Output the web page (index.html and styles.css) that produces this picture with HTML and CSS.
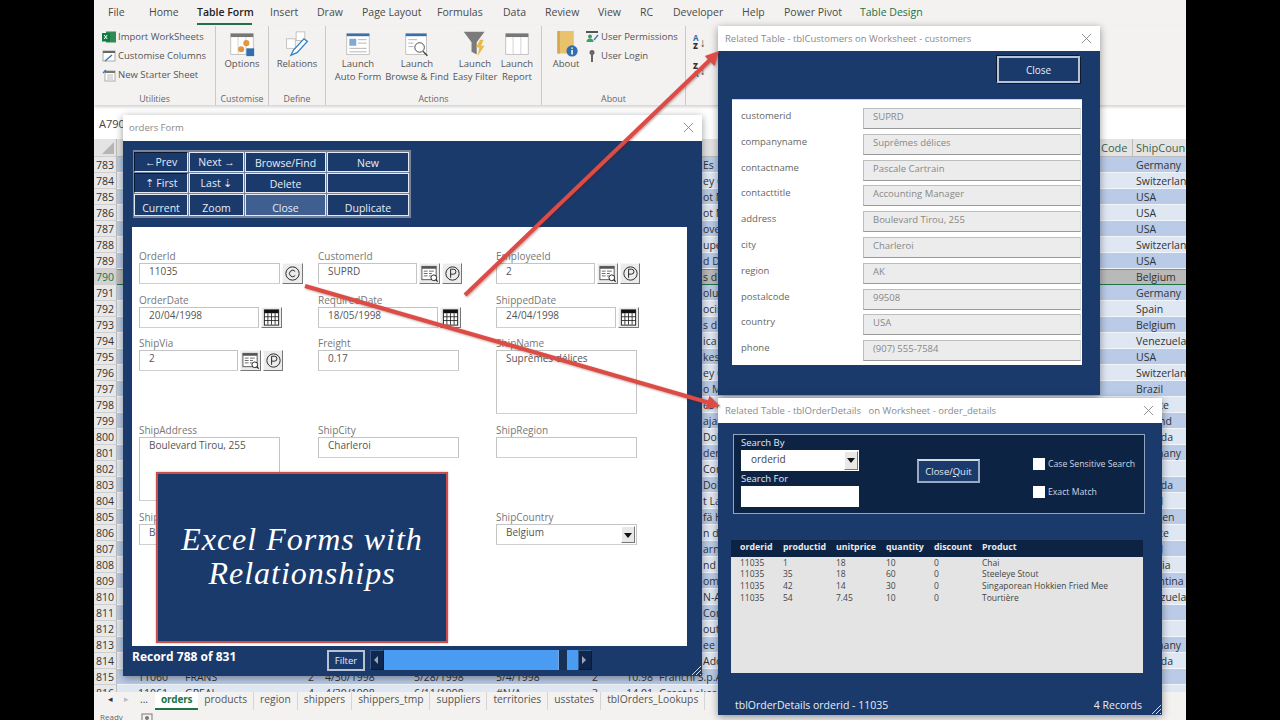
FILE: index.html
```html
<!DOCTYPE html>
<html lang="en">
<head>
<meta charset="utf-8">
<title>Excel Forms with Relationships</title>
<link rel="stylesheet" href="styles.css">
</head>
<body>
<svg class="defs" width="0" height="0" aria-hidden="true">
  <symbol id="i-browse" viewBox="0 0 20 20">
    <rect x="2" y="2.500" width="15" height="14" fill="#fff" stroke="#555"/>
    <rect x="2" y="2.500" width="15" height="2.500" fill="#555"/>
    <path d="M4 7.500h4M4 10h4M4 12.500h4M9.500 7.500h5M9.500 10h3M9.500 12.500h2" stroke="#666" fill="none"/>
    <circle cx="14.500" cy="14.500" r="3" fill="#fff" stroke="#222"/>
    <path d="M16.600 16.600l2 2" stroke="#222" stroke-width="1.300"/>
  </symbol>
  <symbol id="i-p" viewBox="0 0 20 20">
    <circle cx="10" cy="10" r="7" fill="none" stroke="#222"/>
    <path d="M8 14.500v-9h3a2.500 2.500 0 0 1 0 5.200h-3" fill="none" stroke="#222"/>
  </symbol>
  <symbol id="i-c" viewBox="0 0 20 20">
    <circle cx="10" cy="10" r="7" fill="none" stroke="#222"/>
    <path d="M12.800 7.800a3.400 3.400 0 1 0 0 4.400" fill="none" stroke="#222"/>
  </symbol>
  <symbol id="i-cal" viewBox="0 0 20 20">
    <rect x="2.500" y="2" width="15" height="16" fill="#fff" stroke="#222"/>
    <rect x="2.500" y="2" width="15" height="3.500" fill="#111"/>
    <path d="M6.200 5.500v12M10 5.500v12M13.800 5.500v12M2.500 9.200h15M2.500 13.200h15" stroke="#222" stroke-width=".9"/>
  </symbol>
  <symbol id="i-sheet" viewBox="0 0 30 30">
    <rect x="2" y="3" width="26" height="24" fill="#fff" stroke="#bbb"/>
    <rect x="2" y="3" width="26" height="4" fill="#777"/>
    <path d="M10.500 7v20M19.500 7v20" stroke="#ccc"/>
  </symbol>
  <symbol id="i-x" viewBox="0 0 12 12">
    <path d="M1 1l10 10M11 1L1 11" fill="none" stroke="#8a8a8a"/>
  </symbol>
</svg>

<div class="excel">
  <nav class="tabs">
    <span class="tab tab-file">File</span>
    <span class="tab tab-home">Home</span>
    <span class="tab tab-on">Table Form</span>
    <span class="tab tab-ins">Insert</span>
    <span class="tab tab-draw">Draw</span>
    <span class="tab tab-pl">Page Layout</span>
    <span class="tab tab-fm">Formulas</span>
    <span class="tab tab-data">Data</span>
    <span class="tab tab-rv">Review</span>
    <span class="tab tab-vw">View</span>
    <span class="tab tab-rc">RC</span>
    <span class="tab tab-dv">Developer</span>
    <span class="tab tab-hp">Help</span>
    <span class="tab tab-pp">Power Pivot</span>
    <span class="tab tab-td">Table Design</span>
  </nav>

  <section class="ribbon">
    <div class="group g-util">
      <div class="small-list">
        <div class="small">
          <svg class="si" viewBox="0 0 14 14"><rect x="4" y="1.500" width="10" height="11" fill="#2f8a57"/><rect y="3" width="8" height="8.500" fill="#107c41"/><path d="M2.200 5l3 4M5.200 5l-3 4" stroke="#fff"/></svg>Import WorkSheets
        </div>
        <div class="small">
          <svg class="si" viewBox="0 0 14 14"><rect x="1" y="2" width="12" height="10" fill="#fff" stroke="#aaa"/><rect x="1" y="2" width="12" height="2" fill="#666"/><path d="M3 12l7-6" stroke="#3b78b5" stroke-width="1.500"/></svg>Customise Columns
        </div>
        <div class="small">
          <svg class="si" viewBox="0 0 14 14"><rect x="3" y="3" width="10" height="10" fill="#fff" stroke="#aaa"/><rect x="3" y="3" width="10" height="2" fill="#777"/><path d="M1 5l3-3" stroke="#3b78b5" stroke-width="1.500"/><path d="M5 7h6M5 9h6M5 11h6" stroke="#bbb"/></svg>New Starter Sheet
        </div>
      </div>
      <div class="g-name">Utilities</div>
    </div>
    <div class="group g-cust">
      <div class="big">
        <svg class="bi" viewBox="0 0 30 30"><use href="#i-sheet"/><circle cx="20" cy="14" r="3.500" fill="#e3973a"/><circle cx="14" cy="21" r="3.500" fill="#e3973a"/><rect x="20" y="20" width="9" height="9" fill="#2f6fb0"/></svg>
        <span>Options</span>
      </div>
      <div class="g-name">Customise</div>
    </div>
    <div class="group g-def">
      <div class="big">
        <svg class="bi" viewBox="0 0 30 30"><rect x="3" y="9" width="10" height="11" fill="#fff" stroke="#bbb"/><rect x="14" y="1" width="10" height="10" fill="#fff" stroke="#bbb"/><path d="M8 28l3-6 12-13 4 3-12 13z" fill="#fff" stroke="#2f7fc1" stroke-width="1.500"/></svg>
        <span>Relations</span>
      </div>
      <div class="g-name">Define</div>
    </div>
    <div class="group g-act">
      <div class="bigs">
        <div class="big b-af">
          <svg class="bi" viewBox="0 0 30 30"><rect x="2" y="3" width="26" height="24" fill="#fff" stroke="#bbb"/><rect x="2" y="3" width="26" height="3" fill="#3b6fa8"/><rect x="5" y="9" width="8" height="8" fill="#7fa9d6"/><path d="M15 10h10M15 14h10M5 20h20M5 24h20" stroke="#aaa"/></svg>
          <span>Launch<br>Auto Form</span>
        </div>
        <div class="big b-bf">
          <svg class="bi" viewBox="0 0 30 30"><rect x="2" y="3" width="24" height="24" fill="#fff" stroke="#bbb"/><rect x="2" y="3" width="24" height="3" fill="#3b6fa8"/><path d="M5 10h10M5 14h6M5 18h6" stroke="#aaa"/><circle cx="18" cy="19" r="5.500" fill="#fff" stroke="#333"/><path d="M22 23.500l5 5" stroke="#333" stroke-width="1.500"/></svg>
          <span>Launch<br>Browse &amp; Find</span>
        </div>
        <div class="big b-ef">
          <svg class="bi" viewBox="0 0 30 30"><path d="M2 1h24l-9 12v14l-6-3V13z" fill="#7b7b7b"/><path d="M21 10l-5 9h4l-2 10 8-12h-4l3-7z" fill="#e9b949"/></svg>
          <span>Launch<br>Easy Filter</span>
        </div>
        <div class="big b-rp">
          <svg class="bi" viewBox="0 0 30 30"><use href="#i-sheet"/></svg>
          <span>Launch<br>Report</span>
        </div>
      </div>
      <div class="g-name">Actions</div>
    </div>
    <div class="group g-about">
      <div class="about-row">
        <div class="big b-about">
          <svg class="bi" viewBox="0 0 30 30"><rect x="5" y="0" width="19" height="26" fill="#e8c26d"/><rect x="5" y="0" width="3" height="26" fill="#d3a94e"/><circle cx="22" cy="23" r="6.500" fill="#2f6fb0"/><path d="M22 22v5M22 19v1.500" stroke="#fff" stroke-width="1.800"/></svg>
          <span>About</span>
        </div>
        <div class="small-list">
          <div class="small">
            <svg class="si" viewBox="0 0 14 14"><rect x="1" y="1" width="12" height="2" fill="#555"/><circle cx="5" cy="6.500" r="2" fill="#3f9c6b"/><path d="M1.500 12a3.500 3.500 0 0 1 7 0z" fill="#3f9c6b"/><path d="M9 10l4-5" stroke="#3b78b5" stroke-width="1.300"/></svg>User Permissions
          </div>
          <div class="small">
            <svg class="si" viewBox="0 0 14 14"><circle cx="7" cy="3.500" r="2.500" fill="#666"/><rect x="6" y="5" width="2" height="8" fill="#666"/></svg>User Login
          </div>
        </div>
      </div>
      <div class="g-name">About</div>
    </div>
    <div class="group g-sort">
      <div class="sort"><span class="az">A<br><b>Z</b></span><span class="ar">↓</span></div>
      <div class="sort"><span class="az"><b>Z</b><br>A</span><span class="ar">↓</span></div>
    </div>
  </section>

  <div class="fbar"><span class="namebox">A790</span></div>

  <div class="row colhead">
    <span class="rh rh-corner"></span>
    <span class="j">Code</span>
    <span class="k">ShipCoun</span>
  </div>

  <div class="grid">
    <div class="row"><span class="rh">783</span><span class="i">Es</span><span class="k">Germany</span></div>
    <div class="row"><span class="rh">784</span><span class="i">ey C</span><span class="k">Switzerland</span></div>
    <div class="row"><span class="rh">785</span><span class="i">ot M</span><span class="k">USA</span></div>
    <div class="row"><span class="rh">786</span><span class="i">ot M</span><span class="k">USA</span></div>
    <div class="row"><span class="rh">787</span><span class="i">ove</span><span class="k">USA</span></div>
    <div class="row"><span class="rh">788</span><span class="i">upe</span><span class="k">Switzerland</span></div>
    <div class="row"><span class="rh">789</span><span class="i">d D</span><span class="k">USA</span></div>
    <div class="row row-sel"><span class="rh">790</span><span class="i">s d</span><span class="k">Belgium</span></div>
    <div class="row"><span class="rh">791</span><span class="i">olu</span><span class="k">Germany</span></div>
    <div class="row"><span class="rh">792</span><span class="i">ocin</span><span class="k">Spain</span></div>
    <div class="row"><span class="rh">793</span><span class="i">s d</span><span class="k">Belgium</span></div>
    <div class="row"><span class="rh">794</span><span class="i">ica</span><span class="k">Venezuela</span></div>
    <div class="row"><span class="rh">795</span><span class="i">kes</span><span class="k">USA</span></div>
    <div class="row"><span class="rh">796</span><span class="i">ey C</span><span class="k">Switzerland</span></div>
    <div class="row"><span class="rh">797</span><span class="i">o M</span><span class="k">Brazil</span></div>
    <div class="row"><span class="rh">798</span><span class="i">es d</span><span class="k">France</span></div>
    <div class="row"><span class="rh">799</span><span class="i">ajaz</span><span class="k">Finland</span></div>
    <div class="row"><span class="rh">800</span><span class="i">Doll</span><span class="k">Canada</span></div>
    <div class="row"><span class="rh">801</span><span class="i">der</span><span class="k">Germany</span></div>
    <div class="row"><span class="rh">802</span><span class="i">Con</span><span class="k">USA</span></div>
    <div class="row"><span class="rh">803</span><span class="i">Doll</span><span class="k">Canada</span></div>
    <div class="row"><span class="rh">804</span><span class="i">t Lar</span><span class="k">Brazil</span></div>
    <div class="row"><span class="rh">805</span><span class="i">fä H</span><span class="k">Sweden</span></div>
    <div class="row"><span class="rh">806</span><span class="i">n d'</span><span class="k">France</span></div>
    <div class="row"><span class="rh">807</span><span class="i">arne</span><span class="k">Brazil</span></div>
    <div class="row"><span class="rh">808</span><span class="i">nd</span><span class="k">Austria</span></div>
    <div class="row"><span class="rh">809</span><span class="i">omi</span><span class="k">Argentina</span></div>
    <div class="row"><span class="rh">810</span><span class="i">N-A</span><span class="k">Venezuela</span></div>
    <div class="row"><span class="rh">811</span><span class="i">Con</span><span class="k">USA</span></div>
    <div class="row"><span class="rh">812</span><span class="i">outh</span><span class="k">USA</span></div>
    <div class="row"><span class="rh">813</span><span class="i">ee D</span><span class="k">Germany</span></div>
    <div class="row"><span class="rh">814</span><span class="i">Ado</span><span class="k">Canada</span></div>
    <div class="row"><span class="rh">815</span>
      <span class="a">11060</span><span class="b">FRANS</span><span class="c1">2</span><span class="d">4/30/1998</span><span class="e">5/28/1998</span><span class="f">5/4/1998</span><span class="g">2</span><span class="h">10.98</span><span class="i i-full">Franchi S.p.A.</span></div>
    <div class="row"><span class="rh">816</span>
      <span class="a">11061</span><span class="b">GREAL</span><span class="c1">4</span><span class="d">4/30/1998</span><span class="e">6/11/1998</span><span class="f">#N/A</span><span class="g">3</span><span class="h">14.01</span><span class="i i-full">Great Lakes Food</span></div>
  </div>

  <div class="sheets">
    <span class="nav-arrow">◂</span><span class="nav-arrow nav-off">▸</span><span class="dots">...</span>
    <span class="sheet sheet-on">orders</span>
    <span class="sheet">products</span>
    <span class="sheet">region</span>
    <span class="sheet">shippers</span>
    <span class="sheet">shippers_tmp</span>
    <span class="sheet">suppliers</span>
    <span class="sheet">territories</span>
    <span class="sheet">usstates</span>
    <span class="sheet">tblOrders_Lookups</span>
  </div>
  <div class="status"><span>Ready</span><svg class="st-ic" viewBox="0 0 12 10"><rect x="1" y="1" width="10" height="8" fill="none" stroke="#777"/><circle cx="6" cy="5" r="2" fill="#777"/></svg></div>
</div>

<!-- orders form window -->
<div class="win win-orders">
  <header class="title">orders Form<svg class="x"><use href="#i-x"/></svg></header>
  <div class="nb">
    <div class="navgrid">
      <button class="nbtn nbtn-down">←Prev</button><button class="nbtn">Next →</button><button class="nbtn nbtn-low">Browse/Find</button><button class="nbtn nbtn-low">New</button>
      <button class="nbtn nbtn-down">⇡ First</button><button class="nbtn">Last ⇣</button><button class="nbtn nbtn-low">Delete</button><button class="nbtn"></button>
      <button class="nbtn nbtn-clip">Current</button><button class="nbtn nbtn-clip">Zoom</button><button class="nbtn nbtn-clip nbtn-hi">Close</button><button class="nbtn nbtn-clip">Duplicate</button>
    </div>
    <div class="sheet-panel">
      <div class="fields">
        <div class="field"><label>OrderId</label><div class="ctl"><div class="inp w-141">11035</div><span class="ib"><svg><use href="#i-c"/></svg></span></div></div>
        <div class="field"><label>CustomerId</label><div class="ctl"><div class="inp w-99">SUPRD</div><span class="ib"><svg><use href="#i-browse"/></svg></span><span class="ib"><svg><use href="#i-p"/></svg></span></div></div>
        <div class="field"><label>EmployeeId</label><div class="ctl"><div class="inp w-99">2</div><span class="ib"><svg><use href="#i-browse"/></svg></span><span class="ib"><svg><use href="#i-p"/></svg></span></div></div>

        <div class="field"><label>OrderDate</label><div class="ctl"><div class="inp w-120">20/04/1998</div><span class="ib"><svg><use href="#i-cal"/></svg></span></div></div>
        <div class="field"><label>RequiredDate</label><div class="ctl"><div class="inp w-120">18/05/1998</div><span class="ib"><svg><use href="#i-cal"/></svg></span></div></div>
        <div class="field"><label>ShippedDate</label><div class="ctl"><div class="inp w-120">24/04/1998</div><span class="ib"><svg><use href="#i-cal"/></svg></span></div></div>

        <div class="field"><label>ShipVia</label><div class="ctl"><div class="inp w-99">2</div><span class="ib"><svg><use href="#i-browse"/></svg></span><span class="ib"><svg><use href="#i-p"/></svg></span></div></div>
        <div class="field"><label>Freight</label><div class="ctl"><div class="inp w-141">0.17</div></div></div>
        <div class="field"><label>ShipName</label><div class="ctl"><div class="inp w-141 tall">Suprêmes délices</div></div></div>

        <div class="field"><label>ShipAddress</label><div class="ctl"><div class="inp w-141 tall">Boulevard Tirou, 255</div></div></div>
        <div class="field"><label>ShipCity</label><div class="ctl"><div class="inp w-141">Charleroi</div></div></div>
        <div class="field"><label>ShipRegion</label><div class="ctl"><div class="inp w-141"></div></div></div>

        <div class="field"><label>ShipPostal</label><div class="ctl"><div class="inp w-141">B-6000</div></div></div>
        <div class="field"></div>
        <div class="field"><label>ShipCountry</label><div class="ctl"><div class="inp w-141 sel">Belgium<span class="drop"></span></div></div></div>
      </div>
      <div class="banner">Excel Forms with<br>Relationships</div>
    </div>
    <footer class="foot">
      <span class="rec">Record 788 of 831</span>
      <button class="filter">Filter</button>
      <div class="scroll">
        <span class="sb-btn"><i class="tri-l"></i></span><span class="sb-track"></span><span class="sb-thumb"></span><span class="sb-tail"></span><span class="sb-btn"><i class="tri-r"></i></span>
      </div>
    </footer>
    <span class="grip"></span>
  </div>
</div>

<!-- customers window -->
<div class="win win-cust">
  <header class="title">Related Table - tblCustomers on Worksheet - customers<svg class="x"><use href="#i-x"/></svg></header>
  <div class="nb nb-cust">
    <button class="cust-close">Close</button>
    <div class="cust-panel">
      <div class="cr"><label>customerid</label><div class="ro">SUPRD</div></div>
      <div class="cr"><label>companyname</label><div class="ro">Suprêmes délices</div></div>
      <div class="cr"><label>contactname</label><div class="ro">Pascale Cartrain</div></div>
      <div class="cr"><label>contacttitle</label><div class="ro">Accounting Manager</div></div>
      <div class="cr"><label>address</label><div class="ro">Boulevard Tirou, 255</div></div>
      <div class="cr"><label>city</label><div class="ro">Charleroi</div></div>
      <div class="cr"><label>region</label><div class="ro">AK</div></div>
      <div class="cr"><label>postalcode</label><div class="ro">99508</div></div>
      <div class="cr"><label>country</label><div class="ro">USA</div></div>
      <div class="cr"><label>phone</label><div class="ro">(907) 555-7584</div></div>
    </div>
  </div>
</div>

<!-- order details window -->
<div class="win win-det">
  <header class="title">Related Table - tblOrderDetails &nbsp; on Worksheet - order_details<svg class="x"><use href="#i-x"/></svg></header>
  <div class="nb nb-det">
    <div class="search">
      <div class="s-col">
        <label>Search By</label>
        <div class="s-sel">orderid<span class="drop"></span></div>
        <label class="s-l2">Search For</label>
        <div class="s-inp"></div>
      </div>
      <button class="quit">Close/<u>Q</u>uit</button>
      <div class="checks">
        <div class="chk"><span class="box"></span>Case Sensitive Search</div>
        <div class="chk"><span class="box"></span>Exact Match</div>
      </div>
    </div>
    <div class="tbl">
      <div class="tr th"><span>orderid</span><span>productid</span><span>unitprice</span><span>quantity</span><span>discount</span><span>Product</span></div>
      <div class="tbody">
        <div class="tr"><span>11035</span><span>1</span><span>18</span><span>10</span><span>0</span><span>Chai</span></div>
        <div class="tr"><span>11035</span><span>35</span><span>18</span><span>60</span><span>0</span><span>Steeleye Stout</span></div>
        <div class="tr"><span>11035</span><span>42</span><span>14</span><span>30</span><span>0</span><span>Singaporean Hokkien Fried Mee</span></div>
        <div class="tr"><span>11035</span><span>54</span><span>7.45</span><span>10</span><span>0</span><span>Tourtière</span></div>
      </div>
    </div>
    <footer class="det-foot"><span>tblOrderDetails orderid - 11035</span><span>4 Records</span></footer>
    <span class="grip"></span>
  </div>
</div>

<svg class="arrows" viewBox="0 0 1280 720" aria-hidden="true">
  <g class="arrow">
    <line x1="465" y1="295" x2="712" y2="58"/>
    <polygon points="719,51 714.400,66.100 704.800,55.900"/>
    <line x1="305" y1="286" x2="710" y2="403"/>
    <polygon points="720,406 705.600,409.100 709.400,395.700"/>
  </g>
</svg>
</body>
</html>
```
FILE: styles.css
```css
* { box-sizing: border-box; }
html, body { margin: 0; height: 720px; overflow: hidden; background: #000; }
body { position: relative; font-family: "Open Sans", "Noto Sans", sans-serif; font-size: 10px; color: #444; }
.defs { position: absolute; }
button { font: inherit; padding: 0; }

/* Excel shell */
.excel { width: 1092px; height: 720px; margin-left: 94px; background: #fff; display: flex; flex-direction: column; overflow: hidden; }

.tabs { height: 25px; background: #f3f2f1; position: relative; flex: none; font-size: 10.500px; color: #4a4a4a; display: flex; align-items: center; }
.tab { flex: none; height: 25px; line-height: 24px; }
.tab-file { margin-left: 14px; width: 41px; }
.tab-home { width: 48px; }
.tab-on { width: 73px; color: #222; font-weight: 600; position: relative; }
.tab-on::after { content: ""; position: absolute; left: 0; width: 55px; bottom: 0; height: 2px; background: #217346; }
.tab-ins { width: 47px; }
.tab-draw { width: 45px; }
.tab-pl { width: 75px; }
.tab-fm { width: 66px; }
.tab-data { width: 42px; }
.tab-rv { width: 53px; }
.tab-vw { width: 42px; }
.tab-rc { width: 33px; }
.tab-dv { width: 69px; }
.tab-hp { width: 42px; }
.tab-pp { width: 76px; }
.tab-td { color: #217346; }

.ribbon { height: 80px; flex: none; background: #f3f2f1; display: flex; box-shadow: 0 2px 3px rgba(0,0,0,.18); position: relative; z-index: 1; font-size: 9.500px; color: #555; }
.group { flex: none; position: relative; height: 79px; margin-top: 1px; padding-bottom: 14px; display: flex; flex-direction: column; border-right: 1px solid #c9c9c9; }
.g-name { position: absolute; left: 0; right: 0; bottom: 0; text-align: center; font-size: 8.800px; line-height: 12px; color: #666; }
.g-util { width: 122px; padding-left: 8px; }
.g-cust { width: 53px; }
.g-def { width: 57px; }
.g-act { width: 216px; }
.g-about { width: 144px; }
.g-sort { flex: 1; border-right: 0; padding: 2px 0 0 7px; }
.small-list { display: flex; flex-direction: column; margin-top: 1px; }
.small { height: 19px; line-height: 19px; display: flex; align-items: center; gap: 2px; white-space: nowrap; }
.si { width: 14px; height: 14px; flex: none; }
.big { display: flex; flex-direction: column; align-items: center; text-align: center; line-height: 13px; white-space: nowrap; }
.bi { width: 26px; height: 26px; flex: none; margin: 5px 0 0; overflow: visible; }
.bigs { display: flex; }
.b-af { width: 60px; margin-left: 2px; }
.b-bf { width: 58px; }
.b-ef { width: 58px; }
.b-rp { width: 26px; }
.about-row { display: flex; }
.b-about { width: 38px; margin-left: 5px; }
.sort { height: 28px; display: flex; align-items: center; gap: 1px; }
.az { font-size: 8px; line-height: 8px; font-weight: 700; color: #2f6fb0; }
.az b { color: #333; }
.ar { font-size: 12px; color: #444; }

.fbar { height: 34px; flex: none; background: #fff; padding: 10px 0 0 5px; }
.namebox { display: block; width: 50px; font-size: 11px; line-height: 18px; color: #444; }

/* Sheet grid */
.row { height: 16px; display: grid; grid-template-columns: 23px 68px 58px 75px 68px 81px 82px 53px 53px 445px 33px 53px; font-size: 10.500px; line-height: 16px; color: #333; background: #dfe7f3; border-bottom: 1px solid #f2f5fa; white-space: nowrap; }
.row > span { overflow: hidden; grid-row: 1; }
.rh { grid-column: 1; background: #e8e8e8; text-align: center; border-right: 1px solid #bdbdbd; border-bottom: 1px solid #cfcfcf; margin-bottom: -1px; color: #333; }
.a { grid-column: 2; padding-left: 21px; }
.b { grid-column: 3; padding-left: 0; }
.c1 { grid-column: 4; text-align: right; padding-right: 4px; }
.d { grid-column: 5; padding-left: 7px; }
.e { grid-column: 6; padding-left: 28px; }
.f { grid-column: 7; padding-left: 29px; }
.g { grid-column: 8; text-align: right; padding-right: 4px; }
.h { grid-column: 9; text-align: right; padding-right: 2px; }
.i { grid-column: 10; padding-left: 48px; }
.i-full { padding-left: 4px; }
.j { grid-column: 11; padding-left: 1px; }
.k { grid-column: 12; padding-left: 3px; }
.grid { flex: 1; min-height: 0; overflow: hidden; }
.grid .row:nth-child(odd) { background: #b9cbe7; }
.grid .row.row-sel { background: #b9b9b9; border-top: 1px solid #6f9a7e; border-bottom: 1px solid #217346; line-height: 14px; }
.row-sel .rh { background: #d2d2d2; color: #217346; margin-top: -1px; line-height: 16px; }
.colhead { height: 18px; line-height: 18px; background: #e4e4e4; color: #3c6248; font-size: 11px; flex: none; border-bottom: 1px solid #bbb; }
.colhead .j { border-right: 1px solid #bbb; }
.rh-corner { position: relative; background: #e4e4e4; }
.rh-corner::after { content: ""; position: absolute; right: 2px; bottom: 2px; border-style: solid; border-width: 0 0 12px 12px; border-color: transparent transparent #b5b5b5 transparent; }

.sheets { height: 18px; flex: none; background: #f3f2f1; display: flex; font-size: 10.300px; line-height: 14px; color: #555; white-space: nowrap; }
.nav-arrow { width: 14px; text-align: center; margin-left: 9px; font-size: 9px; color: #333; }
.nav-off { color: #bbb; margin-left: 2px; }
.dots { width: 20px; text-align: center; color: #444; margin-left: 1px; margin-right: 1px; }
.sheet { padding: 0 6px; border-right: 1px solid #d5d5d5; }
.sheet-on { background: #fff; color: #217346; font-weight: 700; font-size: 10px; letter-spacing: -.2px; border-bottom: 2px solid #217346; border-right: 0; }
.status { height: 10px; flex: none; background: #f3f2f1; font-size: 8px; line-height: 14px; padding-left: 6px; color: #666; overflow: hidden; display: flex; }
.st-ic { width: 12px; height: 10px; margin: 3px 0 0 18px; }

/* Windows */
.win { position: absolute; z-index: 2; display: flex; flex-direction: column; background: #fff; box-shadow: 0 2px 8px rgba(0,0,0,.4); }
.title { height: 25px; flex: none; background: #fff; color: #8a8a8a; font-size: 9.500px; line-height: 25px; padding-left: 7px; position: relative; white-space: nowrap; }
.x { position: absolute; right: 8.500px; top: 6.500px; width: 11px; height: 11px; }
.nb { flex: 1; min-height: 0; background: #1a3a6b; position: relative; overflow: hidden; }

.win-orders { left: 123px; top: 115px; width: 579px; height: 561px; }
.win-orders .title { height: 26px; padding-left: 6px; }
.navgrid { position: absolute; left: 10px; top: 9px; width: 278px; height: 68px; background: #77839a; padding: 2px 1px; display: grid; grid-template-columns: 54px 55px 81px 82px; grid-template-rows: 20px 20px 22px; gap: 1px; }
.nbtn { background: #1a3a6b; color: #e8edf5; border: 1px solid #e6e9ef; font-size: 10.500px; line-height: 16px; white-space: nowrap; overflow: hidden; }
.nbtn-down { border-color: #0a1830 #e6e9ef #e6e9ef #0a1830; }
.nbtn-low { padding-top: 2px; }
.nbtn-clip { padding-top: 7px; line-height: 13px; }
.nbtn-hi { background: #3f5f91; }
.sheet-panel { position: absolute; left: 9px; top: 86px; width: 555px; height: 419px; background: #fff; }
.fields { display: grid; grid-template-columns: 179px 178px 150px; grid-template-rows: 44px 43px 87px 87px 87px; padding: 23px 0 0 7px; }
.field { display: flex; flex-direction: column; }
.field label { height: 13px; line-height: 13px; color: #777; font-size: 10px; }
.ctl { display: flex; gap: 2px; }
.inp { height: 21px; border: 1px solid #c4c4c4; border-bottom-color: #d0d0d0; padding-left: 9px; font-size: 10px; line-height: 15px; color: #555; white-space: nowrap; position: relative; background: #fff; }
.w-141 { width: 141px; }
.w-120 { width: 120px; }
.w-99 { width: 99px; }
.tall { height: 64px; }
.ib { width: 20.500px; height: 21px; flex: none; background: #ececec; border: 1px solid; border-color: #f8f8f8 #777 #777 #f8f8f8; }
.ib svg { width: 19px; height: 19px; display: block; }
.drop { position: absolute; right: 1px; top: 1px; bottom: 1px; width: 14px; background: #e8e8e8; border: 1px solid; border-color: #fff #777 #777 #fff; }
.drop::after { content: ""; position: absolute; left: 2px; top: 6px; border-style: solid; border-width: 5px 4px 0 4px; border-color: #111 transparent transparent transparent; }
.banner { position: absolute; left: 24px; top: 245px; width: 292px; height: 171px; background: #1a3a6b; border: 2px solid #c9504a; box-shadow: 0 0 2px rgba(120,30,30,.4); color: #fff; font-family: "Liberation Serif", serif; font-style: italic; font-size: 32px; line-height: 34px; letter-spacing: 1px; text-align: center; padding-top: 48px; }
.foot { position: absolute; left: 9px; right: 0; top: 505px; height: 29px; }
.rec { position: absolute; left: 0; top: 3px; color: #fff; font-weight: 700; font-size: 12px; line-height: 16px; }
.filter { position: absolute; left: 195px; top: 4px; width: 38px; height: 21px; background: #1a3a6b; color: #e8edf5; border: 2px solid #b8c2d3; font-size: 9.500px; }
.scroll { position: absolute; left: 238px; top: 4px; width: 222px; height: 20px; display: flex; }
.sb-btn { width: 14px; background: #10274d; border: 1px solid #091a36; border-top-color: #3a5a8c; border-left-color: #3a5a8c; position: relative; flex: none; }
.sb-btn i { position: absolute; top: 5px; left: 3px; border-style: solid; }
.tri-l { border-width: 4px 4px 4px 0; border-color: transparent #99a6bb transparent transparent; }
.tri-r { border-width: 4px 0 4px 4px; border-color: transparent transparent transparent #99a6bb; }
.sb-track { flex: 1; background: #4a9bf2; }
.sb-thumb { width: 9px; background: #163056; border-left: 1px solid #7aa5dc; }
.sb-tail { width: 11px; background: #4a9bf2; }
.grip { position: absolute; right: 1px; bottom: 1px; width: 12px; height: 12px; background: repeating-linear-gradient(135deg, transparent 0 1px, #d8dde6 1px 2px, transparent 2px 3px); clip-path: polygon(100% 0, 100% 100%, 0 100%); }

.win-cust { left: 718px; top: 26px; width: 382px; height: 369px; }
.cust-close { position: absolute; left: 279px; top: 5px; width: 83px; height: 27px; background: #1a3a6b; color: #e8edf5; border: 2px solid #b9c3d4; font-size: 10px; box-shadow: -1px -1px 0 #0c1a33, 1px 1px 0 #0c1a33; }
.cust-panel { position: absolute; left: 14px; top: 48px; width: 350px; height: 266px; background: #fff; padding: 8px 0 0 9px; overflow: hidden; border-top: 1px solid #c8d2e2; }
.cr { height: 25.800px; display: flex; }
.cr label { width: 122px; color: #666; font-size: 9.500px; line-height: 15px; }
.ro { width: 218px; height: 21px; background: #ececec; border: 1px solid #bdbdbd; border-bottom-color: #999; border-right-color: #dcdcdc; color: #888; padding-left: 9px; font-size: 9.500px; line-height: 16px; }

.win-det { left: 718px; top: 398px; width: 444px; height: 317px; z-index: 3; }
.search { position: absolute; left: 15px; top: 11px; width: 412px; height: 80px; background: #0d2344; border: 1px solid #93a4c0; color: #e4e9f1; font-size: 9.500px; }
.s-col { position: absolute; left: 7px; top: 1px; width: 119px; }
.s-col label { display: block; height: 14px; line-height: 14px; }
.s-col .s-l2 { margin-top: 1px; }
.s-sel, .s-inp { height: 21px; background: #fff; color: #444; position: relative; font-size: 10px; line-height: 19px; padding-left: 10px; width: 118px; }
.quit { position: absolute; left: 183px; top: 24px; width: 63px; height: 24px; background: #1a3a6b; color: #e4e9f1; border: 2px solid #9ba9c2; border-top-color: #d5dbe6; font-size: 9.500px; }
.checks { position: absolute; left: 299px; top: 22px; display: flex; flex-direction: column; gap: 15px; }
.chk { display: flex; align-items: center; gap: 3px; height: 13px; font-size: 8.700px; white-space: nowrap; color: #cfd6e2; }
.box { width: 12px; height: 12px; background: #fff; flex: none; }
.tbl { position: absolute; left: 13px; top: 117px; width: 412px; height: 133px; background: #e4e4e4; }
.tr { display: grid; grid-template-columns: 43px 53px 50px 48px 48px 1fr; padding-left: 9px; height: 11.700px; font-size: 8.500px; line-height: 11.700px; color: #444; white-space: nowrap; }
.th { height: 17px; background: #0d2344; color: #e8ecf3; font-weight: 700; line-height: 14px; font-size: 8.800px; }
.tbody { margin-top: -1px; padding-top: .5px; }
.det-foot { position: absolute; left: 17px; right: 20px; top: 274px; display: flex; justify-content: space-between; color: #e8edf5; font-size: 10.500px; line-height: 16px; }

.arrows { position: absolute; z-index: 4; left: 0; top: 0; width: 1280px; height: 720px; pointer-events: none; }
.arrow line { stroke: #dc4c45; stroke-width: 4; }
.arrow polygon { fill: #dc4c45; }
.arrow { filter: drop-shadow(1px 1px 1px rgba(90,20,20,.4)); }
```
